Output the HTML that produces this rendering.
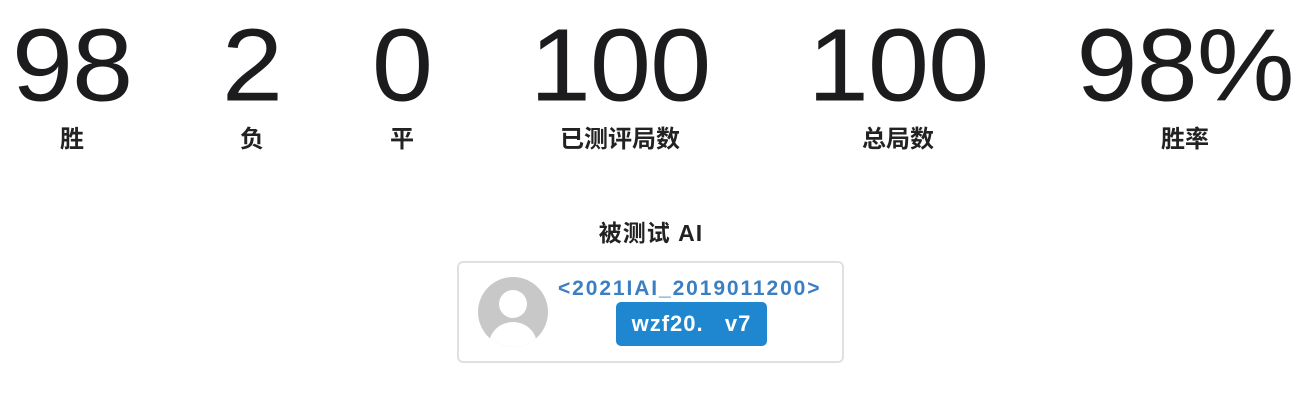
<!DOCTYPE html>
<html><head><meta charset="utf-8"><style>
body{margin:0;width:1302px;height:402px;background:#fff;position:relative;overflow:hidden;font-family:"Liberation Sans","Noto Sans CJK SC",sans-serif;color:#1c1c1e}
.s{position:absolute;top:0;width:300px;text-align:center}
.n{font-size:110px;line-height:1;margin-top:14px;letter-spacing:-1px;transform:scaleY(0.94);transform-origin:top}
.l{font-size:24px;font-weight:bold;margin-top:-5px;color:#222}
</style></head><body>
<div class="s" style="left:-78px"><div class="n">98</div><div class="l">胜</div></div>
<div class="s" style="left:102px"><div class="n">2</div><div class="l">负</div></div>
<div class="s" style="left:252px"><div class="n">0</div><div class="l">平</div></div>
<div class="s" style="left:470px"><div class="n">100</div><div class="l">已测评局数</div></div>
<div class="s" style="left:748px"><div class="n">100</div><div class="l">总局数</div></div>
<div class="s" style="left:1035px"><div class="n">98%</div><div class="l">胜率</div></div>
<div style="position:absolute;left:451px;width:400px;top:214px;text-align:center;font-size:23px;font-weight:bold;color:#222;letter-spacing:1px">被测试 AI</div>
<div style="position:absolute;left:457px;top:261px;width:383px;height:98px;border:2px solid #e0e0e0;border-radius:6px"></div>
<svg style="position:absolute;left:478px;top:277px" width="70" height="70" viewBox="0 0 70 70">
<defs><clipPath id="c"><circle cx="35" cy="35" r="35"/></clipPath></defs>
<circle cx="35" cy="35" r="35" fill="#c8c8c8"/>
<g clip-path="url(#c)" fill="#fff"><circle cx="35" cy="27" r="14"/><ellipse cx="35" cy="68" rx="24" ry="23"/></g>
</svg>
<div style="position:absolute;left:558px;top:277px;font-size:21px;font-weight:bold;color:#3b7fc2;letter-spacing:1.9px">&lt;2021IAI_2019011200&gt;</div>
<div style="position:absolute;left:616px;top:302px;width:151px;height:44px;background:#1f87cf;border-radius:5px;color:#fff;font-size:22px;font-weight:bold;line-height:44px;text-align:center;white-space:pre;letter-spacing:1px">wzf20.   v7</div>
</body></html>
